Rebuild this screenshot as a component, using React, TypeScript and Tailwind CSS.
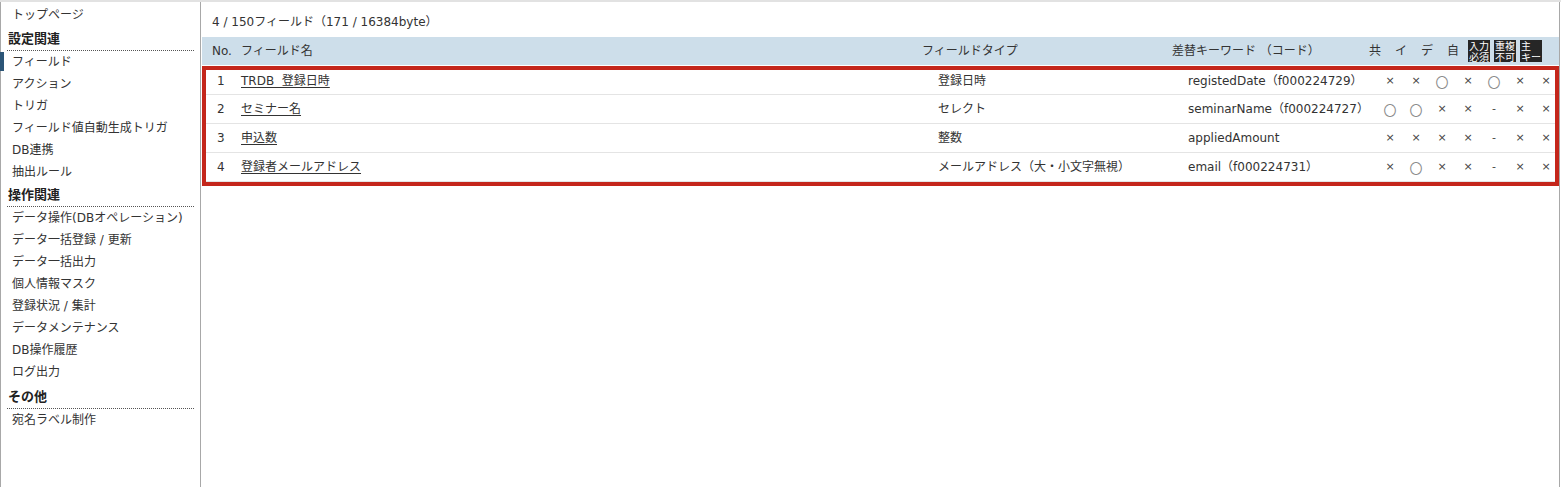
import React from "react";

type Row = { no: number; name: string; type: string; kw: string; flags: string[] };

const rows: Row[] = [
  { no: 1, name: "TRDB  登録日時", type: "登録日時", kw: "registedDate（f000224729）", flags: ["×", "×", "〇", "×", "〇", "×", "×"] },
  { no: 2, name: "セミナー名", type: "セレクト", kw: "seminarName（f000224727）", flags: ["〇", "〇", "×", "×", "-", "×", "×"] },
  { no: 3, name: "申込数", type: "整数", kw: "appliedAmount", flags: ["×", "×", "×", "×", "-", "×", "×"] },
  { no: 4, name: "登録者メールアドレス", type: "メールアドレス（大・小文字無視）", kw: "email（f000224731）", flags: ["×", "〇", "×", "×", "-", "×", "×"] },
];

const group1 = ["フィールド", "アクション", "トリガ", "フィールド値自動生成トリガ", "DB連携", "抽出ルール"];
const group2 = [
  "データ操作(DBオペレーション)",
  "データ一括登録 / 更新",
  "データ一括出力",
  "個人情報マスク",
  "登録状況 / 集計",
  "データメンテナンス",
  "DB操作履歴",
  "ログ出力",
];

function Item({ label, active }: { label: string; active?: boolean }) {
  return (
    <div className="relative h-[22px] leading-[22px] pl-[11px] text-[12px] text-[#333] whitespace-nowrap">
      {active && <span className="absolute left-[-1px] top-[1px] w-[4px] h-[19px] bg-[#2c5577]" />}
      {label}
    </div>
  );
}

function Heading({ label, mt }: { label: string; mt: string }) {
  return (
    <div className={`${mt} mx-[6px] pl-[1px] h-[23px] leading-[22px] text-[13px] font-bold text-[#222] border-b border-dotted border-[#555]`}>
      {label}
    </div>
  );
}

function Flag({ v }: { v: string }) {
  if (v === "〇") {
    return <span className="text-[13px] text-[#8a8a8a] leading-none font-['Noto_Sans_CJK_JP',sans-serif]">〇</span>;
  }
  if (v === "-") {
    return <span className="text-[11px] text-[#444]">-</span>;
  }
  return <span className="text-[11px] text-[#444]">×</span>;
}

function Badge({ top, bottom }: { top: string; bottom: string }) {
  return (
    <div className="w-[22px] h-[22px] bg-[#262626] text-white text-[10px] leading-[11px] pl-[1px] font-['Noto_Sans_CJK_JP',sans-serif] flex flex-col">
      <div className="whitespace-nowrap h-[11px]">{top}</div>
      <div className="whitespace-nowrap h-[11px]">{bottom}</div>
    </div>
  );
}

export default function App() {
  return (
    <div className="w-[1561px] h-[487px] bg-white border-t-2 border-[#e2e2e2] flex font-['DejaVu_Sans','Noto_Sans_CJK_JP',sans-serif] text-[#333]">
      {/* Sidebar */}
      <div className="w-[201px] h-full border-l border-r border-[#a8a8a8] pt-[2px] shrink-0">
        <Item label="トップページ" />
        <Heading label="設定関連" mt="mt-[2px]" />
        {group1.map((g, i) => (
          <Item key={g} label={g} active={i === 0} />
        ))}
        <Heading label="操作関連" mt="mt-[1px]" />
        {group2.map((g) => (
          <Item key={g} label={g} />
        ))}
        <Heading label="その他" mt="mt-[3px]" />
        <Item label="宛名ラベル制作" />
      </div>

      {/* Main */}
      <div className="w-[1359px] h-full border-r border-[#a8a8a8] pl-[1px] shrink-0">
        <div className="pt-[10px] pl-[10px] h-[35px] leading-[20px] text-[12px]">4 / 150フィールド（171 / 16384byte）</div>

        <div className="h-[28px] bg-[#cddeea] grid grid-cols-[39px_681px_250px_190px_repeat(7,26px)] items-center text-[12px] text-[#333]">
          <div className="pl-[10px]">No.</div>
          <div>フィールド名</div>
          <div>フィールドタイプ</div>
          <div className="whitespace-nowrap">差替キーワード （コード）</div>
          <div className="text-center">共</div>
          <div className="text-center">イ</div>
          <div className="text-center">デ</div>
          <div className="text-center">自</div>
          <div className="flex justify-center"><Badge top="入力" bottom="必須" /></div>
          <div className="flex justify-center"><Badge top="重複" bottom="不可" /></div>
          <div className="flex justify-center"><Badge top="主" bottom="キー" /></div>
        </div>

        <div className="mt-[1px] border-4 border-[#c4261b]">
          {rows.map((r, i) => (
            <div
              key={r.no}
              className={`${i === 0 ? "h-[25px] pb-[2px]" : "h-[29px]"} border-b border-[#e4e4e4] grid grid-cols-[35px_697px_250px_189px_repeat(7,26px)] items-center text-[12px]`}
            >
              <div className="pl-[11px]">{r.no}</div>
              <div>
                <span className="underline underline-offset-2 whitespace-pre">{r.name}</span>
              </div>
              <div className="whitespace-nowrap">{r.type}</div>
              <div className="whitespace-nowrap">{r.kw}</div>
              {r.flags.map((f, j) => (
                <div key={j} className="flex justify-center items-center">
                  <Flag v={f} />
                </div>
              ))}
            </div>
          ))}
        </div>
      </div>
    </div>
  );
}
